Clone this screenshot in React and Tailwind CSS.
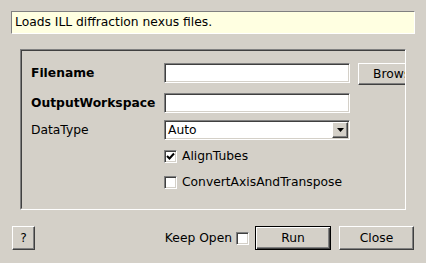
const font = { fontFamily: '"DejaVu Sans", Verdana, sans-serif' };

const sunken =
    "border border-t-[#808080] border-l-[#808080] border-b-white border-r-white shadow-[inset_1px_1px_0_#404040,inset_-1px_-1px_0_#d4d0c8]";
const raised =
    "border border-t-white border-l-white border-b-[#404040] border-r-[#404040] shadow-[inset_-1px_-1px_0_#808080]";

const CheckBox = ({ checked }) => (
    <div className={`w-[13px] h-[13px] bg-white shrink-0 flex items-center justify-center ${sunken}`}>
        {checked && (
            <svg width="9" height="9" viewBox="0 0 9 9">
                <path d="M1 4 L3.5 6.5 L8 1.5" fill="none" stroke="#000" strokeWidth="2" />
            </svg>
        )}
    </div>
);

const Btn = ({ label, className = "" }) => (
    <div className={`h-[24px] bg-[#d4d0c8] flex items-center justify-center shrink-0 ${raised} ${className}`}>
        {label}
    </div>
);

export default function App() {
    return (
        <div
            className="w-[426px] h-[263px] bg-[#d4d0c8] text-black text-[12.3px] flex flex-col overflow-hidden"
            style={font}
        >
            {/* Description */}
            <div className="mt-[11px] ml-[11px] w-[404px] h-[23px] bg-[#ffffe1] border border-t-[#808080] border-l-[#808080] border-b-white border-r-white flex items-center pl-[3px]">
                Loads ILL diffraction nexus files.
            </div>

            {/* Properties panel */}
            <div
                className={`mt-[15px] ml-[20px] w-[386px] h-[161px] overflow-hidden border border-t-[#808080] border-l-[#808080] border-b-white border-r-white`}
            >
                <div className="h-full border border-t-[#404040] border-l-[#404040] border-b-[#d4d0c8] border-r-[#d4d0c8] pl-[9px] pt-[12px] flex flex-col w-[440px]">
                    <div className="flex items-start h-[22px]">
                        <div className="w-[133px] h-[20px] flex items-center font-bold">Filename</div>
                        <div className={`w-[186px] h-[20px] bg-white ${sunken}`} />
                        <div className={`ml-[8px] w-[75px] h-[22px] bg-[#d4d0c8] flex items-center justify-center ${raised}`}>
                            Browse
                        </div>
                    </div>
                    <div className="flex items-center h-[20px] mt-[8px]">
                        <div className="w-[133px] font-bold">OutputWorkspace</div>
                        <div className={`w-[186px] h-[20px] bg-white ${sunken}`} />
                    </div>
                    <div className="flex items-center h-[20px] mt-[7px]">
                        <div className="w-[133px]">DataType</div>
                        <div className={`w-[186px] h-[20px] bg-white flex items-center ${sunken}`}>
                            <span className="flex-1 pl-[3px]">Auto</span>
                            <div className={`w-[16px] h-[16px] mr-[1px] bg-[#d4d0c8] flex items-center justify-center ${raised}`}>
                                <svg width="7" height="4" viewBox="0 0 7 4">
                                    <path d="M0 0 H7 L3.5 4 Z" fill="#000" />
                                </svg>
                            </div>
                        </div>
                    </div>
                    <div className="flex items-center h-[13px] mt-[10px] pl-[133px] gap-[5px]">
                        <CheckBox checked />
                        <span>AlignTubes</span>
                    </div>
                    <div className="flex items-center h-[13px] mt-[13px] pl-[133px] gap-[5px]">
                        <CheckBox />
                        <span>ConvertAxisAndTranspose</span>
                    </div>
                </div>
            </div>

            {/* Bottom buttons */}
            <div className="mt-[16px] flex items-center px-[12px]">
                <Btn label="?" className="w-[23px]" />
                <div className="flex-1" />
                <span>Keep Open</span>
                <div className="ml-[4px]">
                    <CheckBox />
                </div>
                <div className="ml-[6px] w-[76px] h-[24px] border border-black bg-[#d4d0c8] flex items-center justify-center shadow-[inset_1px_1px_0_#ffffff,inset_-1px_-1px_0_#404040,inset_-2px_-2px_0_#808080]">
                    Run
                </div>
                <Btn label="Close" className="ml-[8px] w-[75px]" />
            </div>
        </div>
    );
}
